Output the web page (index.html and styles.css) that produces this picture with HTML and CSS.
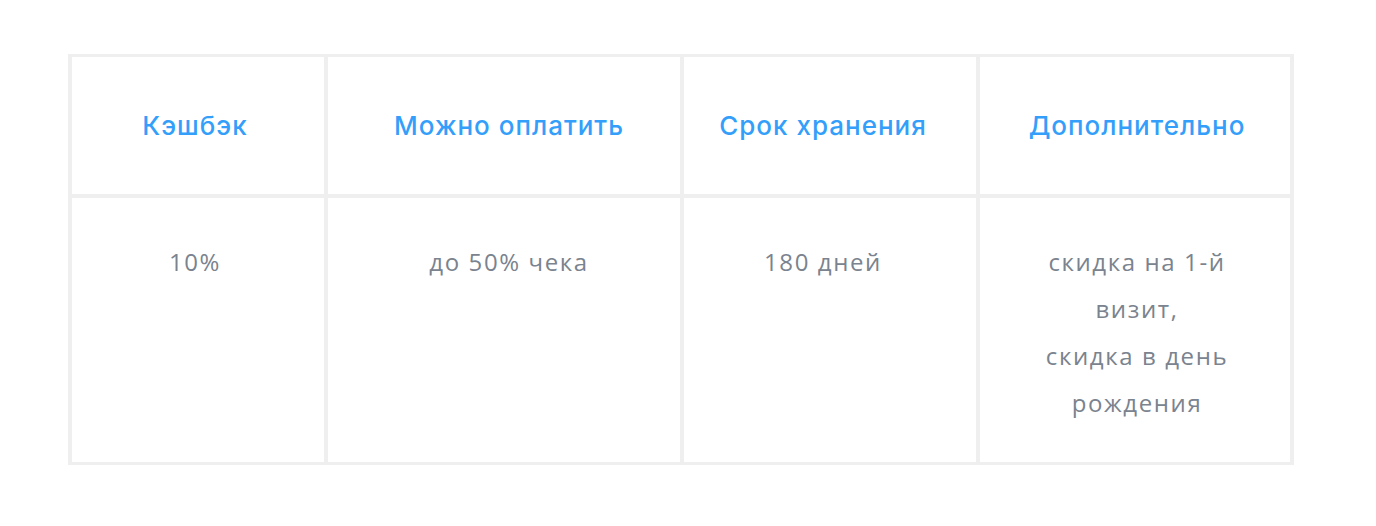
FILE: index.html
```html
<!DOCTYPE html>
<html lang="ru">
<head>
<meta charset="utf-8">
<title>Кэшбэк</title>
<link rel="stylesheet" href="styles.css">
</head>
<body>
<div class="table">
  <div class="cell head c1">Кэшбэк</div>
  <div class="cell head c2">Можно оплатить</div>
  <div class="cell head c3">Срок хранения</div>
  <div class="cell head c4">Дополнительно</div>
  <div class="cell body c1">10%</div>
  <div class="cell body c2">до 50% чека</div>
  <div class="cell body c3">180 дней</div>
  <div class="cell body c4">скидка на 1-й<br>визит,<br>скидка в день<br>рождения</div>
</div>
</body>
</html>
```
FILE: styles.css
```css
html, body {
  margin: 0;
  padding: 0;
  background: #ffffff;
}
body {
  padding: 54px 0 0 68px;
}
.table {
  display: grid;
  grid-template-columns: 252px 352px 292px 310px;
  grid-template-rows: 137px 264px;
  gap: 4px;
  padding: 3px 4px;
  background: #efefef;
  width: max-content;
}
.cell {
  background: #ffffff;
  text-align: center;
}
.c1 { padding-right: 6px; }
.c2 { padding-left: 10px; }
.c3 { padding-right: 14px; }
.c4 { padding-left: 4px; }
.head {
  display: flex;
  align-items: center;
  justify-content: center;
  font-family: "Inter", "Noto Sans", sans-serif;
  font-weight: 500;
  font-size: 26px;
  color: #349ffa;
  letter-spacing: 1px;
}
.body {
  padding-top: 40px;
  font-family: "Open Sans", "Noto Sans", sans-serif;
  font-size: 24px;
  line-height: 47px;
  color: #7a838e;
  letter-spacing: 1.6px;
}
```
